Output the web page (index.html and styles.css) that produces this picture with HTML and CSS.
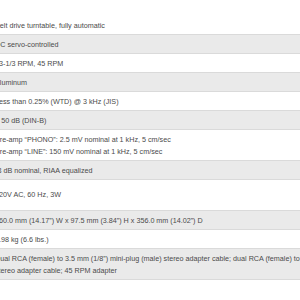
FILE: index.html
```html
<!DOCTYPE html>
<html>
<head>
<meta charset="utf-8">
<link rel="stylesheet" href="styles.css">
</head>
<body>
<div class="specs">
  <div class="row">Belt drive turntable, fully automatic</div>
  <div class="row alt">DC servo-controlled</div>
  <div class="row">33-1/3 RPM, 45 RPM</div>
  <div class="row alt">Aluminum</div>
  <div class="row">Less than 0.25% (WTD) @ 3 kHz (JIS)</div>
  <div class="row alt">&gt; 50 dB (DIN-B)</div>
  <div class="row">Pre-amp “PHONO”: 2.5 mV nominal at 1 kHz, 5 cm/sec<br>Pre-amp “LINE”: 150 mV nominal at 1 kHz, 5 cm/sec</div>
  <div class="row alt">-3 dB nominal, RIAA equalized</div>
  <div class="row tall">120V AC, 60 Hz, 3W</div>
  <div class="row alt">360.0 mm (14.17”) W x 97.5 mm (3.84”) H x 356.0 mm (14.02”) D</div>
  <div class="row">2.98 kg (6.6 lbs.)</div>
  <div class="row alt">Dual RCA (female) to 3.5 mm (1/8”) mini-plug (male) stereo adapter cable; dual RCA (female) to stereo adapter cable; 45 RPM adapter</div>
</div>
</body>
</html>
```
FILE: styles.css
```css
html, body {
  margin: 0;
  padding: 0;
  background: #fff;
}
body {
  font-family: "Liberation Sans", Arial, sans-serif;
  font-size: 7.2px;
  line-height: 12px;
  color: #4a4a4a;
  overflow: hidden;
}
.specs {
  margin: 16px 0 0 -13px;
  width: 326px;
}
.row {
  padding: 4px 8px 2px;
  border-bottom: 1px solid #dadada;
}
.row.alt {
  background: #eaeaea;
}
.row.tall {
  display: flex;
  align-items: center;
  min-height: 24px;
  padding-top: 3px;
  padding-bottom: 3px;
}
```
